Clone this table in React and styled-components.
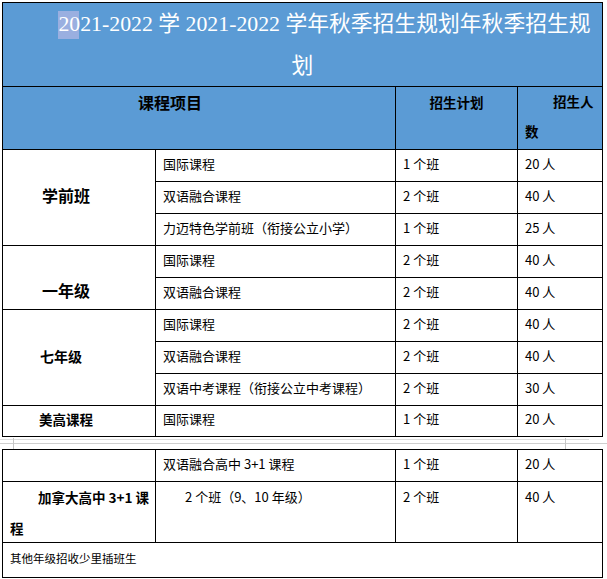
import React from "react";
import styled, { createGlobalStyle, css } from "styled-components";

const Global = createGlobalStyle`
  html, body { margin: 0; padding: 0; background: #fff; }
  body { font-family: "Noto Sans CJK SC", "Noto Sans", sans-serif; color: #000; }
`;

const Page = styled.div`
  padding: 2px 0 0 2px;
  width: 605px;
  box-sizing: border-box;
`;

const Sheet = styled.div`
  display: grid;
  grid-template-columns: 153px 240px 122px 85px;
  grid-template-rows: ${(p) => p.$rows};
  border-left: 1px solid #000;
  border-top: 1px solid #000;
  width: 601px;
  box-sizing: border-box;
`;

const cellBase = css`
  box-sizing: border-box;
  border-right: 1px solid #000;
  border-bottom: 1px solid #000;
  grid-column: span ${(p) => p.$cols || 1};
  grid-row: span ${(p) => p.$rows || 1};
  display: flex;
  flex-direction: column;
  justify-content: ${(p) =>
    p.$v === "top" ? "flex-start" : p.$v === "bottom" ? "flex-end" : "center"};
  padding: 0 7px ${(p) => (p.$v ? 0 : 4)}px;
  min-width: 0;
  overflow: hidden;
  font-family: "Noto Sans CJK SC", "Noto Sans", sans-serif;
  text-autospace: no-autospace;
`;

const TitleCell = styled.div`
  box-sizing: border-box;
  grid-column: 1 / -1;
  border-right: 1px solid #000;
  border-bottom: 1px solid #000;
  background: #5b9bd5;
  color: #fff;
  padding: 0 6px;
  font-family: "Liberation Serif", "Noto Sans CJK SC", serif;
  font-size: 21.8px;
  line-height: 42px;
  text-align: center;
  text-indent: 44px;
  white-space: nowrap;
  text-autospace: no-autospace;
`;

const Sel = styled.span`
  position: relative;
  &::before {
    content: "";
    position: absolute;
    left: 0;
    top: -1px;
    width: 21px;
    height: 28px;
    background: #9aafe0;
  }
`;

const SelText = styled.span`
  position: relative;
`;

const TitleRest = styled.span`
  position: relative;
`;

const HeadCell = styled.div`
  ${cellBase}
  background: #5b9bd5;
  font-weight: 700;
  font-size: ${(p) => p.$size || 13.5}px;
  line-height: ${(p) => p.$lh || 30}px;
  padding-left: ${(p) => p.$pl ?? 7}px;
  text-align: ${(p) => (p.$center ? "center" : "left")};
  text-indent: ${(p) => p.$indent || 0}px;
`;

const GradeCell = styled.div`
  ${cellBase}
  font-weight: 700;
  font-size: ${(p) => p.$size || 14}px;
  line-height: ${(p) => p.$lh || 30}px;
  padding-left: ${(p) => p.$pl ?? 7}px;
  padding-right: ${(p) => p.$pr ?? 7}px;
  ${(p) => (p.$pb != null ? `padding-bottom: ${p.$pb}px;` : "")}
  text-indent: ${(p) => p.$indent || 0}px;
`;

const DataCell = styled.div`
  ${cellBase}
  font-size: 13px;
  line-height: 30px;
  white-space: nowrap;
  text-indent: ${(p) => p.$indent || 0}px;
`;

const NoteCell = styled.div`
  ${cellBase}
  grid-column: 1 / -1;
  font-size: 11.5px;
  line-height: 30px;
`;

const PageGap = styled.div`
  position: relative;
  height: 12px;
  width: 605px;
  margin-left: -2px;
`;

const GapLine = styled.div`
  position: absolute;
  left: ${(p) => p.$left}px;
  width: ${(p) => p.$width}px;
  top: ${(p) => p.$top}px;
  height: 1px;
  background: ${(p) => p.$color};
`;

const GapMark = styled.div`
  position: absolute;
  left: ${(p) => p.$left}px;
  top: 1px;
  width: 1px;
  height: 11px;
  background: #c6c6c6;
`;

const upperRows = [
  { grade: "学前班", span: 3, size: 16, pl: 39, pb: 6, items: [
    ["国际课程", "1 个班", "20 人"],
    ["双语融合课程", "2 个班", "40 人"],
    ["力迈特色学前班（衔接公立小学）", "1 个班", "25 人"],
  ] },
  { grade: "一年级", span: 2, size: 16, pl: 39, v: "bottom", pb: 4, items: [
    ["国际课程", "2 个班", "40 人"],
    ["双语融合课程", "2 个班", "40 人"],
  ] },
  { grade: "七年级", span: 3, size: 14, pl: 37, items: [
    ["国际课程", "2 个班", "40 人"],
    ["双语融合课程", "2 个班", "40 人"],
    ["双语中考课程（衔接公立中考课程）", "2 个班", "30 人"],
  ] },
  { grade: "美高课程", span: 1, size: 13.5, pl: 36, items: [
    ["国际课程", "1 个班", "20 人"],
  ] },
];

export default function App() {
  return (
    <Page>
      <Global />
      <Sheet $rows="84px 63px repeat(8, 32px) 31px">
        <TitleCell>
          <Sel><SelText>2</SelText></Sel>
          <TitleRest>
            021-2022 学 2021-2022 学年秋季招生规划年秋季招生规
            <br />
            划
          </TitleRest>
        </TitleCell>
        <HeadCell $cols={2} $v="top" $pl={135} $size={16}>课程项目</HeadCell>
        <HeadCell $v="top" $center>招生计划</HeadCell>
        <HeadCell $v="top" $indent={28} $lh={29.5}>招生人数</HeadCell>
        {upperRows.map((g) => (
          <React.Fragment key={g.grade}>
            <GradeCell $rows={g.span} $size={g.size} $pl={g.pl} $v={g.v} $pb={g.pb}>
              {g.grade}
            </GradeCell>
            {g.items.map((it, i) => (
              <React.Fragment key={i}>
                <DataCell>{it[0]}</DataCell>
                <DataCell>{it[1]}</DataCell>
                <DataCell>{it[2]}</DataCell>
              </React.Fragment>
            ))}
          </React.Fragment>
        ))}
      </Sheet>
      <PageGap>
        <GapLine $left={0} $width={589} $top={2} $color="#dcdcdc" />
        <GapLine $left={0} $width={607} $top={6} $color="#cfcfcf" />
        <GapMark $left={13} />
        <GapMark $left={565} />
      </PageGap>
      <Sheet $rows="32px 61px 35px">
        <GradeCell />
        <DataCell>双语融合高中 3+1 课程</DataCell>
        <DataCell>1 个班</DataCell>
        <DataCell>20 人</DataCell>
        <GradeCell $v="top" $size={13.5} $lh={31} $indent={28} $pr={0}>
          加拿大高中 3+1 课程
        </GradeCell>
        <DataCell $v="top" $indent={22}>2 个班（9、10 年级）</DataCell>
        <DataCell $v="top">2 个班</DataCell>
        <DataCell $v="top">40 人</DataCell>
        <NoteCell>其他年级招收少里插班生</NoteCell>
      </Sheet>
    </Page>
  );
}
